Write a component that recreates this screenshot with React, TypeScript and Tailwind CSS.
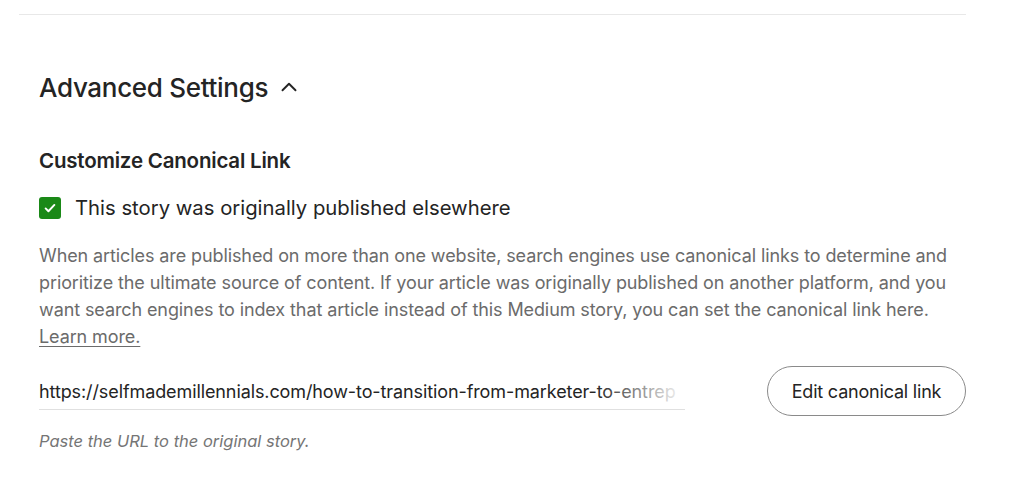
import { ChevronUp } from 'lucide-react';

export default function App() {
  return (
    <div className="w-[1024px] h-[484px] bg-white overflow-hidden font-['Inter',sans-serif] text-[#242424]">
      <div className="ml-[19px] w-[947px] pt-[14px]">
        <div className="h-px bg-[#e8e8e8]" />
        <div className="pl-[20px] pr-0">
          <div className="flex items-center gap-[8px] mt-[55px] h-[34px]">
            <h2 className="text-[26px] font-medium tracking-[-0.3px]">Advanced Settings</h2>
            <ChevronUp className="w-[26px] h-[26px] text-[#242424]" strokeWidth={1.75} />
          </div>

          <h3 className="mt-[44px] text-[20.5px] font-semibold tracking-[-0.2px] leading-[26px]">
            Customize Canonical Link
          </h3>

          <label className="mt-[20px] flex items-center gap-[14px] h-[28px]">
            <span className="w-[22px] h-[22px] rounded-[3px] bg-[#1a8917] flex items-center justify-center">
              <svg viewBox="0 0 16 16" className="w-[14px] h-[14px]" fill="none">
                <path d="M3 8.5l3.2 3.2L13 4.5" stroke="white" strokeWidth="2.2" strokeLinecap="round" strokeLinejoin="round" />
              </svg>
            </span>
            <span className="text-[20.3px] tracking-[0px]">This story was originally published elsewhere</span>
          </label>

          <p className="mt-[20px] text-[18px] leading-[27px] text-[#6b6b6b] tracking-[-0.1px] whitespace-nowrap">
            When articles are published on more than one website, search engines use canonical links to determine and
            <br />
            prioritize the ultimate source of content. If your article was originally published on another platform, and you
            <br />
            want search engines to index that article instead of this Medium story, you can set the canonical link here.
            <br />
            <a className="underline underline-offset-[3px]">Learn more.</a>
          </p>

          <div className="mt-[16px] flex items-start justify-between">
            <div className="mt-[13px] w-[646px] border-b border-[#e0e0e0] pb-[4px] relative whitespace-nowrap">
              <span className="text-[18px] leading-[26px] block text-[#242424] tracking-[-0.1px]">
                https://selfmademillennials.com/how-to-transition-from-marketer-to-entrep
              </span>
              <div className="absolute right-0 top-0 bottom-[1px] w-[90px] bg-gradient-to-r from-white/0 to-white" />
            </div>
            <button className="w-[199px] h-[50px] rounded-full border border-[#8a8a8a] text-[18px] text-[#242424] tracking-[-0.2px]">
              Edit canonical link
            </button>
          </div>

          <p className="mt-[14px] text-[16.5px] leading-[22px] italic text-[#757575] tracking-[0px]">
            Paste the URL to the original story.
          </p>
        </div>
      </div>
    </div>
  );
}
